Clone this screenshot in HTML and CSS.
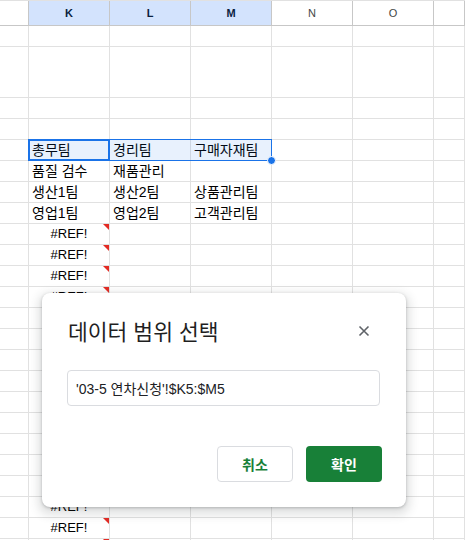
FILE: index.html
```html
<!DOCTYPE html>
<html lang="ko">
<head>
  <meta charset="UTF-8" />
  <meta name="viewport" content="width=device-width, initial-scale=1.0" />
  <title>데이터 범위 선택</title>
  <link rel="stylesheet" href="styles.css">
</head>
<body>
  <div class="sheet">
    <div class="row head">
      <div class="cell"></div>
      <div class="cell col sel">K</div>
      <div class="cell col sel">L</div>
      <div class="cell col sel">M</div>
      <div class="cell col">N</div>
      <div class="cell col">O</div>
      <div class="cell"></div>
    </div>

    <div class="row"><div class="cell"></div><div class="cell"></div><div class="cell"></div><div class="cell"></div><div class="cell"></div><div class="cell"></div><div class="cell"></div></div>
    <div class="row tall"><div class="cell"></div><div class="cell"></div><div class="cell"></div><div class="cell"></div><div class="cell"></div><div class="cell"></div><div class="cell"></div></div>
    <div class="row"><div class="cell"></div><div class="cell"></div><div class="cell"></div><div class="cell"></div><div class="cell"></div><div class="cell"></div><div class="cell"></div></div>
    <div class="row"><div class="cell"></div><div class="cell"></div><div class="cell"></div><div class="cell"></div><div class="cell"></div><div class="cell"></div><div class="cell"></div></div>

    <div class="row"><div class="cell"></div><div class="cell ko">총무팀</div><div class="cell ko">경리팀</div><div class="cell ko">구매자재팀</div><div class="cell"></div><div class="cell"></div><div class="cell"></div></div>
    <div class="row"><div class="cell"></div><div class="cell ko">품질 검수</div><div class="cell ko">재품관리</div><div class="cell"></div><div class="cell"></div><div class="cell"></div><div class="cell"></div></div>
    <div class="row"><div class="cell"></div><div class="cell ko">생산1팀</div><div class="cell ko">생산2팀</div><div class="cell ko">상품관리팀</div><div class="cell"></div><div class="cell"></div><div class="cell"></div></div>
    <div class="row"><div class="cell"></div><div class="cell ko">영업1팀</div><div class="cell ko">영업2팀</div><div class="cell ko">고객관리팀</div><div class="cell"></div><div class="cell"></div><div class="cell"></div></div>

    <div id="refRows"></div>

    <!-- selected range K5:M5 -->
    <div class="range-box">
      <div class="active-cell"></div>
      <span class="fill-handle"></span>
    </div>
  </div>

  <div class="dialog">
    <div class="dialog-head">
      <h2>데이터 범위 선택</h2>
      <button class="close" aria-label="닫기">
        <svg width="12" height="12" viewBox="0 0 12 12">
          <path d="M1.5 1.5 L10.5 10.5 M10.5 1.5 L1.5 10.5" stroke="#5f6368" stroke-width="1.6" fill="none"/>
        </svg>
      </button>
    </div>
    <input class="range-input" value="'03-5 연차신청'!$K5:$M5" />
    <div class="actions">
      <button class="btn ghost">취소</button>
      <button class="btn primary">확인</button>
    </div>
  </div>

  <script>
    const refRows = document.getElementById('refRows');
    for (let i = 0; i < 16; i++) {
      const row = document.createElement('div');
      row.className = 'row';
      row.innerHTML = '<div class="cell"></div><div class="cell ref">#REF!</div>' +
        '<div class="cell"></div><div class="cell"></div><div class="cell"></div><div class="cell"></div><div class="cell"></div>';
      refRows.appendChild(row);
    }
  </script>
</body>
</html>
```

FILE: styles.css
```css
* {
  box-sizing: border-box;
}

body {
  margin: 0;
  background: #fff;
  font-family: "Liberation Sans", "Noto Sans CJK KR", Arial, sans-serif;
  color: #000;
  overflow: hidden;
}

.sheet {
  position: relative;
}

.row {
  display: grid;
  grid-template-columns: 29px repeat(5, 81px) 1fr;
  height: 21px;
}

.row.tall {
  height: 51px;
}

.cell {
  border-right: 1px solid #e1e1e1;
  border-bottom: 1px solid #e1e1e1;
  font-size: 13px;
  line-height: 16px;
  padding: 0 3px 2px;
  display: flex;
  align-items: flex-end;
  white-space: nowrap;
  overflow: visible;
  position: relative;
}

.cell.ko {
  font-size: 14px;
  padding-left: 3px;
}

.row.head {
  height: 26px;
  border-top: 1px solid #e1e1e1;
}

.row.head .cell {
  border-color: #c7c7c7;
  align-items: center;
  justify-content: center;
  padding: 0;
  font-size: 11px;
  color: #444746;
}

.row.head .cell.sel {
  background: #d3e3fd;
  color: #0b1f3f;
  font-weight: 700;
}

.cell.ref {
  justify-content: center;
}

.cell.ref::after {
  content: "";
  position: absolute;
  top: 0;
  right: 0;
  border-top: 6px solid #e32b24;
  border-left: 6px solid transparent;
}

.range-box {
  position: absolute;
  left: 28px;
  top: 139px;
  width: 244px;
  height: 22px;
  border: 1px solid #1a73e8;
  background: rgba(26, 115, 232, 0.1);
}

.active-cell {
  position: absolute;
  left: -1px;
  top: -1px;
  width: 82px;
  height: 22px;
  border: 2px solid #1a73e8;
}

.fill-handle {
  position: absolute;
  right: -5px;
  bottom: -5px;
  width: 9px;
  height: 9px;
  border-radius: 50%;
  background: #1a73e8;
  border: 1px solid #fff;
}

.dialog {
  position: absolute;
  left: 42px;
  top: 293px;
  width: 364px;
  height: 214px;
  background: #fff;
  border-radius: 8px;
  padding: 24px 25px 25px;
  box-shadow: 0 1px 3px 0 rgba(60, 64, 67, 0.3), 0 4px 10px 4px rgba(60, 64, 67, 0.15);
  font-family: "Noto Sans CJK KR", "Liberation Sans", sans-serif;
}

.dialog-head {
  display: flex;
  align-items: center;
  justify-content: space-between;
  height: 28px;
}

.dialog-head h2 {
  margin: 0 0 0 1px;
  font-size: 21.5px;
  font-weight: 400;
  line-height: 28px;
  color: #1f1f1f;
}

.close {
  width: 24px;
  height: 24px;
  margin-right: 5px;
  padding: 0;
  border: none;
  background: none;
  display: flex;
  align-items: center;
  justify-content: center;
}

.range-input {
  display: block;
  width: 313px;
  height: 36px;
  margin-top: 25px;
  padding: 0 8px;
  border: 1px solid #dadce0;
  border-radius: 4px;
  font-family: "Liberation Sans", "Noto Sans CJK KR", sans-serif;
  font-size: 14px;
  color: #202124;
  outline: none;
}

.actions {
  display: flex;
  justify-content: flex-end;
  gap: 13px;
  margin-top: 40px;
  margin-right: -1px;
}

.btn {
  width: 76px;
  height: 36px;
  border-radius: 4px;
  font-family: "Noto Sans CJK KR", sans-serif;
  font-size: 14px;
  font-weight: 700;
}

.btn.ghost {
  background: #fff;
  border: 1px solid #dadce0;
  color: #188038;
}

.btn.primary {
  background: #188038;
  border: none;
  color: #fff;
}
```
